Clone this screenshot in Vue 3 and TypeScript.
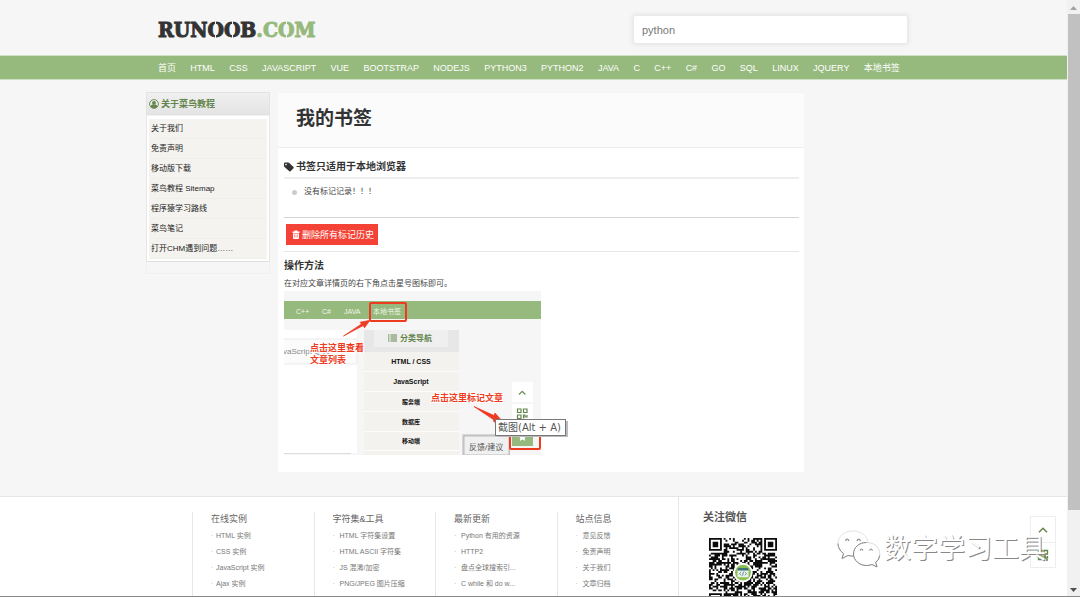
<script setup lang="ts">
import { ref } from 'vue'

interface FooterColumn {
  title: string
  links: string[]
}

const query = ref('python')

const navItems: string[] = [
  '首页', 'HTML', 'CSS', 'JAVASCRIPT', 'VUE', 'BOOTSTRAP', 'NODEJS', 'PYTHON3', 'PYTHON2',
  'JAVA', 'C', 'C++', 'C#', 'GO', 'SQL', 'LINUX', 'JQUERY', '本地书签',
]

const aboutLinks: string[] = [
  '关于我们', '免责声明', '移动版下载', '菜鸟教程 Sitemap', '程序猿学习路线', '菜鸟笔记', '打开CHM遇到问题……',
]

const footerColumns: FooterColumn[] = [
  { title: '在线实例', links: ['HTML 实例', 'CSS 实例', 'JavaScript 实例', 'Ajax 实例'] },
  { title: '字符集&工具', links: ['HTML 字符集设置', 'HTML ASCII 字符集', 'JS 混淆/加密', 'PNG/JPEG 图片压缩'] },
  { title: '最新更新', links: ['Python 有用的资源', 'HTTP2', '盘点全球搜索引...', 'C while 和 do w...', 'C 语言整数与 d...'] },
  { title: '站点信息', links: ['意见反馈', '免责声明', '关于我们', '文章归档'] },
]

const guideMenu = [
  { label: 'HTML / CSS', y: 73, cjk: false },
  { label: 'JavaScript', y: 93, cjk: false },
  { label: '服务端', y: 113, cjk: true },
  { label: '数据库', y: 133, cjk: true },
  { label: '移动端', y: 152, cjk: true },
]

const QR_SIZE = 37

function finderCell(x: number, y: number): boolean | null {
  const origins = [[0, 0], [QR_SIZE - 7, 0], [0, QR_SIZE - 7]]
  for (const [ox, oy] of origins) {
    const dx = x - ox
    const dy = y - oy
    if (dx >= -1 && dx <= 7 && dy >= -1 && dy <= 7) {
      const d = Math.max(Math.abs(dx - 3), Math.abs(dy - 3))
      return d === 3 || d <= 1
    }
  }
  return null
}

function buildQrPath(): string {
  let seed = 20477
  let path = ''
  for (let y = 0; y < QR_SIZE; y++) {
    for (let x = 0; x < QR_SIZE; x++) {
      seed = (seed * 1103515245 + 12345) % 2147483648
      const dark = finderCell(x, y) ?? ((seed >> 12) % 100 < 56)
      if (dark) path += `M${x} ${y}h1v1h-1z`
    }
  }
  return path
}

const qrPath = buildQrPath()
</script>

<template>
  <div class="window">
    <div class="page">
      <header class="top wrap">
        <a href="#" class="logo" aria-label="RUNOOB.COM">
          <svg width="160" height="26" viewBox="0 0 160 26">
            <text x="0" y="20" class="logo-dark">RUNOOB<tspan class="logo-green">.COM</tspan></text>
            <path d="M57.500 3v19M74.500 3v19M128.500 3v19" stroke="#f6f6f6" />
          </svg>
        </a>
        <input v-model="query" class="search" type="text" aria-label="搜索" />
      </header>

      <nav class="nav">
        <ul class="wrap nav-list">
          <li v-for="item in navItems" :key="item"><a href="#">{{ item }}</a></li>
        </ul>
      </nav>

      <div class="wrap content">
        <aside class="side">
          <h2 class="side-title">
            <svg width="10" height="10" viewBox="0 0 20 20">
              <circle cx="10" cy="10" r="8.8" fill="none" stroke="#64854c" stroke-width="1.8" />
              <circle cx="10" cy="7.6" r="3.8" fill="#64854c" />
              <path d="M3 15c1-3 3.500-4 5-4h4c1.500 0 4 1 5 4-3 4-11 4-14 0z" fill="#64854c" />
            </svg>
            关于菜鸟教程
          </h2>
          <ul class="side-list">
            <li v-for="link in aboutLinks" :key="link"><a href="#">{{ link }}</a></li>
          </ul>
          <div class="side-foot"></div>
        </aside>

        <main class="main">
          <div class="main-head"><h1>我的书签</h1></div>
          <div class="main-body">
            <h2 class="section">
              <svg width="10" height="10" viewBox="0 0 20 20">
                <path fill="#333" fill-rule="evenodd" d="M0 3Q0 1 2 1h6q1.500 0 2.500 1l8.500 8q1 1 0 2.300l-6 6.200q-1.300 1-2.400 0L1 10Q0 9 0 7.500zM4 3.300a1.600 1.600 0 1 0 .01 0z" />
              </svg>
              书签只适用于本地浏览器
            </h2>
            <ul class="marks"><li>没有标记记录！！！</li></ul>
            <button type="button" class="clear">
              <svg width="8" height="9" viewBox="0 0 16 18">
                <path fill="#fff" fill-rule="evenodd" d="M5 1h6v2h4v3H1V3h4zM2 7h12v9q0 2-2 2H4q-2 0-2-2zm3 2v6h1V9zm2.500 0v6h1V9zM10 9v6h1V9z" />
              </svg>
              删除所有标记历史
            </button>
            <h3 class="method">操作方法</h3>
            <p class="hint">在对应文章详情页的右下角点击星号图标即可。</p>

            <svg class="guide" width="284" height="164" viewBox="0 0 284 164" role="img" aria-label="操作方法">
              <rect width="257" height="164" fill="#f6f6f6" />
              <rect y="10" width="257" height="18" fill="#96b97d" />
              <g class="g-nav">
                <text x="12" y="23">C++</text>
                <text x="38" y="23">C#</text>
                <text x="60" y="23">JAVA</text>
                <text x="89" y="23">本地书签</text>
              </g>
              <rect y="39" width="73" height="123" fill="#fff" />
              <rect x="-1" y="48" width="74" height="25" fill="#fbfbfb" stroke="#ebebeb" />
              <path d="M0 162.500H67" stroke="#ddd" />
              <text x="-1" y="63" class="g-title">vaScript 定义 ›</text>

              <rect x="80" y="39" width="95" height="22" fill="#e7e7e7" />
              <rect x="90" y="39" width="74" height="17" fill="#efefef" />
              <path d="M104 44h1.500m1 0h6.500m-9 2h1.500m1 0h6.500m-9 2h1.500m1 0h6.500m-9 2h1.500m1 0h6.500" stroke="#64854c" stroke-width="1.200" />
              <text x="116" y="50" class="g-head">分类导航</text>
              <rect x="80" y="61" width="95" height="103" fill="#f4f2ee" />
              <path d="M80 80.500h95M80 100.500h95M80 120.500h95M80 140.500h95M80 159.500h95" stroke="#fcfcfb" />
              <text v-for="m in guideMenu" :key="m.label" x="127" :y="m.y" :class="['g-item', { 'g-cjk': m.cjk }]">{{ m.label }}</text>

              <rect x="228" y="91" width="21" height="20" fill="#fff" />
              <path d="M235 103.500l3.200-3.200 3.200 3.200" fill="none" stroke="#6d9157" stroke-width="1.300" />
              <rect x="228" y="113" width="21" height="20" fill="#fff" />
              <g fill="none" stroke="#64854c" stroke-width="1.200">
                <path d="M233.500 118h3.500v3.500h-3.500zM239.500 118h3.500v3.500h-3.500zM233.500 124h3.500v3.500h-3.500zM239.500 127.500v-3.500h1.500v2h2v-2" />
              </g>
              <rect x="228" y="134" width="21" height="21" fill="#96b97d" />
              <path d="M238.500 142l1.300 2.700 3 .4-2.200 2 .6 3-2.700-1.500-2.700 1.500.6-3-2.200-2 3-.4z" fill="#fff" />

              <rect x="178" y="143" width="48" height="21" fill="#d6d6d6" />
              <rect x="180" y="145" width="45" height="19" fill="#f0f0f0" stroke="#999" stroke-width=".6" />
              <text x="185" y="159" class="g-feed">反馈/建议</text>

              <g fill="none" stroke="#ee3a20" stroke-width="2">
                <rect x="86" y="12" width="36" height="18" rx="1" />
                <rect x="226" y="141" width="30" height="17" rx="1" />
              </g>
              <path d="M59.500 45L77.500 33l-1.500-1.700 10-2-5.500 7.500-1.300-2.200z" fill="#ee3a20" stroke="#ee3a20" stroke-width=".7" />
              <path d="M190 115.500l20 9 1-2.500 8 9h-9l-.7-2.500z" fill="#ee3a20" stroke="#ee3a20" stroke-width=".7" />
              <g class="g-note">
                <text x="26" y="60">点击这里查看</text>
                <text x="26" y="72">文章列表</text>
                <text x="147" y="110">点击这里标记文章</text>
              </g>

              <rect x="213" y="130" width="71" height="16" fill="#bbb" />
              <rect x="211.500" y="128.500" width="70" height="16" fill="#fff" stroke="#777" />
              <text x="214" y="140" class="g-tip">截图(Alt + A)</text>
            </svg>
          </div>
        </main>
      </div>

      <footer class="footer">
        <div class="wrap foot-wrap">
          <div class="foot-cols">
            <section v-for="col in footerColumns" :key="col.title" class="foot-col">
              <h4>{{ col.title }}</h4>
              <ul>
                <li v-for="link in col.links" :key="link"><a href="#">{{ link }}</a></li>
              </ul>
            </section>
          </div>
          <section class="wechat">
            <h3>关注微信</h3>
            <svg class="qr" width="68" height="68" viewBox="0 0 37 37" role="img" aria-label="微信二维码">
              <path :d="qrPath" fill="#0c0c0c" />
              <circle cx="18.500" cy="18.800" r="5.300" fill="#fff" />
              <circle cx="18.500" cy="18.800" r="4.300" fill="#8cc152" />
              <rect x="15.500" y="16.300" width="6" height="5" rx=".5" fill="#e8f0ea" />
              <rect x="15.500" y="16.300" width="6" height="1.400" fill="#41707a" />
              <path d="M17.500 18.500l-.9.9.9.9M19.500 18.500l.9.900-.9.900M18.800 18.300l-.6 2.200" fill="none" stroke="#41707a" stroke-width=".4" />
            </svg>
          </section>
        </div>
      </footer>

      <div class="tools">
        <button type="button" aria-label="返回顶部">
          <svg width="10" height="8" viewBox="0 0 10 8"><path d="M1 6.200l4-4 4 4" fill="none" stroke="#64854c" stroke-width="1.500" /></svg>
        </button>
        <button type="button" aria-label="二维码">
          <svg width="12" height="12" viewBox="0 0 12 12">
            <path d="M1.500 1.500h3.500v3.500h-3.500zM7 1.500h3.500v3.500H7zM1.500 7h3.500v3.500h-3.500zM7 11V7h1.500v2h2V7M9 11h2" fill="none" stroke="#64854c" stroke-width="1.300" />
          </svg>
        </button>
      </div>

      <div class="watermark">
        <svg width="44" height="38" viewBox="0 0 44 38">
          <g fill="#fff" stroke-linejoin="round">
            <path d="M16 1C7 1 1 6.500 1 13.500c0 4 2 7.500 5.500 10L5 28.500l6-3c8 2.500 20-1 20-12C31 6 24 1 16 1z" stroke="#d5d5d5" stroke-width=".7" />
            <path d="M1 13.500c0 4 2 7.500 5.500 10L5 28.500l6-3q3 .8 6 .4" fill="none" stroke="#888" />
            <path d="M29.500 12.500C22 12.500 16.500 17.500 16.500 24s6 11.500 13 11.500q3 0 5.500-1l5 2.500-1.300-4.500c8-6.500 4-20-9.200-20z" stroke="#ccc" stroke-width=".7" />
            <path d="M29.500 12.500C22 12.500 16.500 17.500 16.500 24s6 11.500 13 11.500q3 0 5.500-1l5 2.500-1.300-4.500q3.500-3 4-7" fill="none" stroke="#888" />
          </g>
          <path d="M8.500 11q1.500-4 3.500 0M20 11q1.500-4 3.500 0M23 20.500q1.500-3 3 0M32.500 20.500q1.500-3 3 0" fill="none" stroke="#888" stroke-width="1.200" />
        </svg>
        <span>数字学习工具</span>
      </div>
    </div>

    <div class="scrollbar">
      <svg width="13" height="14" viewBox="0 0 13 14"><path d="M3 10l3.500-4 3.500 4z" fill="#a3a3a3" /></svg>
      <div class="thumb"></div>
      <svg class="down" width="13" height="14" viewBox="0 0 13 14"><path d="M3 5l3.500 4L10 5z" fill="#505050" /></svg>
    </div>
    <div class="edge"></div>
  </div>
</template>

<style>
html,
body {
  margin: 0;
  overflow: hidden;
}
</style>

<style scoped>
.window {
  position: relative;
  display: flex;
  height: 100vh;
  overflow: hidden;
  background: #f6f6f6;
  color: #333;
  font: 8px/16px "Liberation Sans", "Noto Sans CJK SC", sans-serif;
}
.window * {
  box-sizing: border-box;
}
ul, h1, h2, h3, h4, p {
  margin: 0;
  padding: 0;
  list-style: none;
}
a {
  color: inherit;
  text-decoration: none;
}
.page {
  position: relative;
  flex: 1;
  min-width: 0;
  overflow: hidden;
}
.wrap {
  max-width: 775px;
  margin: 0 auto;
}
.top {
  display: flex;
  align-items: center;
  justify-content: space-between;
  height: 55px;
  padding: 4px 14px 0 12px;
}
.logo svg {
  display: block;
  overflow: visible;
}
.logo-dark {
  font: bold 21px "DejaVu Serif Condensed", "DejaVu Serif", serif;
  fill: #333;
  stroke: #333;
  stroke-width: 1px;
}
.logo-green {
  fill: #96b97d;
  stroke: #96b97d;
}
.search {
  width: 273px;
  height: 27px;
  padding: 0 8px;
  border: 0;
  border-radius: 2px;
  outline: 0;
  background: #fff;
  box-shadow: 0 0 4px 2px #e6e6e6;
  color: #777;
  font: 11px "Liberation Sans", sans-serif;
}
.nav {
  height: 25px;
  border-top: 1px solid #cfe0c4;
  border-bottom: 1px solid #cfe0c4;
  background: #96b97d;
}
.nav-list {
  display: flex;
  justify-content: space-between;
  padding: 0 21px 0 12px;
  color: #fff;
  font-size: 9px;
  line-height: 24px;
  white-space: nowrap;
}
.content {
  display: grid;
  grid-template-columns: 124px minmax(0, 526px);
  gap: 8px;
  align-items: start;
  padding-top: 12px;
}
.side-title {
  display: flex;
  align-items: center;
  gap: 2px;
  height: 23px;
  padding-left: 2px;
  border: 1px solid #e2e2e2;
  background: linear-gradient(#f0f0f0, #e4e4e4);
  color: #64854c;
  font-size: 9px;
}
.side-list {
  padding: 3px 2px 2px;
  border: 1px solid #e6e6e6;
  border-top-color: #f2f2f2;
  border-bottom-color: #dfdfdf;
  background: #fff;
}
.side-list li {
  height: 20px;
  padding-left: 2px;
  border-bottom: 1px solid #f1efeb;
  background: #f5f3ef;
  color: #222;
  line-height: 19px;
}
.side-foot {
  height: 12px;
  border: 1px solid #f0f0f0;
  border-top: 0;
}
.main {
  margin-top: 1px;
  background: #fff;
}
.main-head {
  height: 55px;
  padding-left: 18px;
  border-bottom: 1px solid #eee;
  background: #fbfbfb;
}
.main-head h1 {
  font-size: 19px;
  line-height: 52px;
}
.main-body {
  padding: 8px 5px 17px 6px;
}
.section {
  display: flex;
  align-items: center;
  gap: 2px;
  border-bottom: 2px solid #eee;
  font-size: 10px;
  line-height: 21px;
}
.marks {
  padding: 3px 0 15px 8px;
  border-bottom: 1px solid #d0d6d0;
}
.marks li {
  display: flex;
  align-items: center;
  gap: 7px;
  color: #444;
  line-height: 20px;
}
.marks li::before {
  width: 5px;
  height: 5px;
  border-radius: 50%;
  background: #ccc;
  content: "";
}
.clear {
  display: flex;
  align-items: center;
  gap: 2px;
  height: 21px;
  margin: 6px 0 6px 2px;
  padding: 0 4px 0 6px;
  border: 0;
  background: #f44336;
  color: #fff;
  font: 9px "Liberation Sans", "Noto Sans CJK SC", sans-serif;
}
.method {
  padding-top: 3px;
  border-top: 1px solid #e6e6e6;
  font-size: 10px;
  line-height: 21px;
}
.hint {
  color: #444;
  line-height: 15px;
}
.guide {
  display: block;
}
.g-nav {
  fill: #eef5e9;
  font-size: 7px;
}
.g-title {
  fill: #888;
  font-size: 8px;
}
.g-head {
  fill: #64854c;
  font-size: 8px;
  font-weight: bold;
}
.g-item {
  fill: #111;
  font-size: 7px;
  font-weight: bold;
  text-anchor: middle;
}
.g-cjk {
  font-size: 6px;
}
.g-feed {
  fill: #555;
  font-size: 8px;
}
.g-note {
  fill: #ee3a20;
  stroke: #fff;
  stroke-width: 2px;
  stroke-linejoin: round;
  paint-order: stroke;
  font-size: 9px;
  font-weight: bold;
}
.g-tip {
  fill: #555;
  font: 10px "DejaVu Sans", "Noto Sans CJK SC", sans-serif;
}
.footer {
  height: 160px;
  margin-top: 24px;
  border-top: 1px solid #e6e6e6;
  background: #fff;
}
.foot-wrap {
  display: flex;
  height: 100%;
  padding-left: 46px;
}
.foot-cols {
  display: grid;
  flex: 0 1 486px;
  grid-template-columns: repeat(4, 1fr);
  padding-top: 15px;
}
.foot-col {
  padding-left: 18px;
  border-left: 1px solid #e6e6e6;
  color: #777;
  white-space: nowrap;
}
.foot-col h4 {
  color: #666;
  font-size: 9px;
  font-weight: normal;
  line-height: 14px;
  padding-bottom: 2px;
}
.foot-col li {
  display: flex;
  font-size: 7px;
}
.foot-col li::before {
  width: 7px;
  color: #aaa;
  content: "·";
}
.foot-col:first-child li::before {
  width: 5px;
}
.wechat {
  padding: 12px 0 0 24px;
  border-left: 1px solid #e6e6e6;
}
.wechat h3 {
  color: #555;
  font-size: 11px;
}
.qr {
  display: block;
  margin: 13px 0 0 6px;
}
.tools {
  position: absolute;
  right: 11px;
  bottom: 29px;
  width: 26px;
  border: 1px solid #eee;
  background: #fff;
}
.tools button {
  display: flex;
  align-items: center;
  justify-content: center;
  width: 100%;
  height: 25px;
  padding: 0;
  border: 0;
  background: #fff;
}
.tools button + button {
  border-top: 1px solid #eee;
}
.watermark {
  position: absolute;
  right: 21px;
  bottom: 28px;
  display: flex;
  align-items: center;
  gap: 3px;
  color: #fff;
  font-size: 27px;
  line-height: 40px;
  text-shadow: 1px 1px 0 #888;
  white-space: nowrap;
}
.scrollbar {
  display: flex;
  flex-direction: column;
  width: 13px;
  background: #f1f1f1;
}
.scrollbar svg {
  flex: none;
}
.thumb {
  flex: 0 0 83%;
  margin-left: 1px;
  background: #c1c1c1;
}
.down {
  margin-top: auto;
}
.edge {
  position: absolute;
  right: 0;
  bottom: 0;
  left: 0;
  height: 1px;
  background: #888;
}
</style>
